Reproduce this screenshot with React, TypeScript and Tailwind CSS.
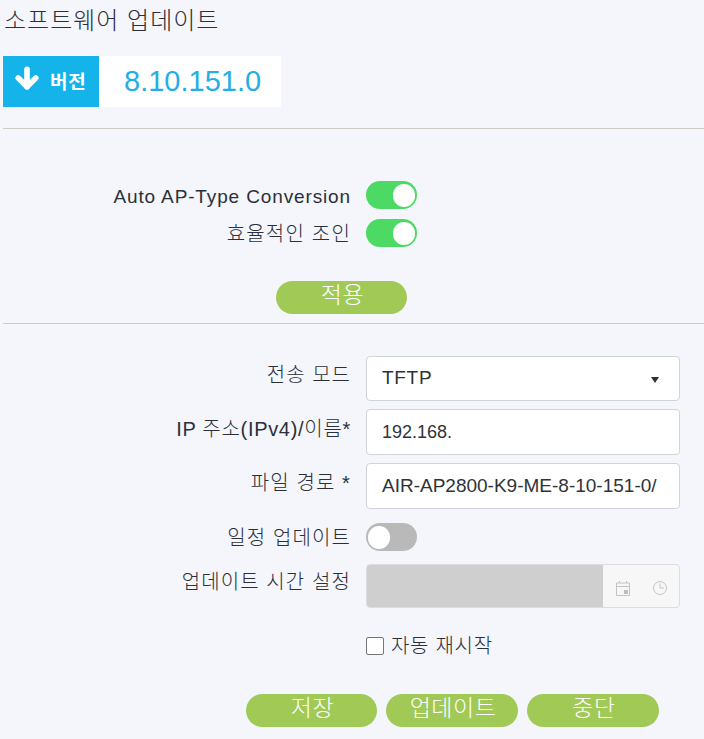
import React from 'react';
import { ArrowDown } from 'lucide-react';

const FONT = 'font-["Liberation_Sans","Noto_Sans_CJK_KR",sans-serif]';

const Toggle = ({ on }: { on: boolean }) => (
  <div className={`flex h-[28px] w-[51px] shrink-0 items-center rounded-full px-[2px] ${on ? 'justify-end bg-[#4cd964]' : 'justify-start bg-[#b9b9b9]'}`}>
    <div className="h-[23px] w-[22px] rounded-full bg-white" />
  </div>
);

const Pill = ({ label, width }: { label: string; width: string }) => (
  <button className={`flex h-[33px] items-start justify-center rounded-full bg-[#a0c955] pl-[2px] pt-[1px] text-[23px] font-light leading-[26px] tracking-[0.5px] text-white ${width}`}>
    {label}
  </button>
);

const Row = ({ label, top, children }: { label: string; top?: string; children: React.ReactNode }) => (
  <div className="flex items-start">
    <div className={`w-[351px] shrink-0 text-right leading-[24px] text-[#2b3038] ${top ?? ''}`}>{label}</div>
    <div className="ml-[15px]">{children}</div>
  </div>
);

const Field = ({ value, height, text, children }: { value: string; height?: string; text?: string; children?: React.ReactNode }) => (
  <div className={`flex w-[314px] items-center justify-between rounded-[4px] border border-[#d0d3d8] bg-white pl-[15px] pr-[20px] text-[#2f3338] ${height ?? 'h-[46px]'} ${text ?? 'text-[19px]'}`}>
    <span>{value}</span>
    {children}
  </div>
);

export default function App() {
  return (
    <div className={`h-[739px] w-[704px] overflow-hidden bg-[#f4f6fb] ${FONT}`}>
      <h1 className="pl-[4px] pt-[7px] text-[24px] font-light leading-[28px] tracking-[1px] text-[#2b3038]">소프트웨어 업데이트</h1>

      <div className="ml-[3px] mt-[21px] flex h-[51px] w-[278px] bg-white">
        <div className="flex w-[96px] items-center bg-[#14b3ea] pl-[9px] text-white">
          <ArrowDown size={30} strokeWidth={4.5} className="-mt-[8px]" />
          <span className="ml-[8px] mt-[3px] text-[19px] font-bold tracking-[0.7px]">버전</span>
        </div>
        <div className="pl-[25px] text-[29px] leading-[50px] text-[#25aee6]">8.10.151.0</div>
      </div>

      <div className="ml-[3px] mt-[21px] h-[1px] bg-[#cdcbc4]" />

      <div className="mt-[52px] flex flex-col gap-[10px]">
        <Row label="Auto AP-Type Conversion" top="pt-[4px] text-[19px] tracking-[0.87px]"><Toggle on /></Row>
        <Row label="효율적인 조인" top="pt-[3px] text-[20px] font-light tracking-[1.2px]"><Toggle on /></Row>
      </div>

      <div className="ml-[276px] mt-[34px]"><Pill label="적용" width="w-[131px]" /></div>

      <div className="ml-[3px] mt-[9px] h-[1px] bg-[#cdcbc4]" />

      <div className="mt-[32px] flex flex-col gap-[8px]">
        <Row label="전송 모드" top="pt-[7px] text-[20px] font-light tracking-[1px]">
          <Field value="TFTP" height="h-[45px]" text="text-[19px] tracking-[0.7px]">
            <span className="mt-[3px] h-0 w-0 border-x-[4px] border-t-[6px] border-x-transparent border-t-[#2f3338]" />
          </Field>
        </Row>
        <Row label="IP 주소(IPv4)/이름*" top="pt-[8px] text-[20px] font-light tracking-[0.7px]">
          <Field value="192.168." text="text-[18px]" />
        </Row>
        <Row label="파일 경로 *" top="pt-[8px] text-[20px] font-light tracking-[1.1px]">
          <Field value="AIR-AP2800-K9-ME-8-10-151-0/" />
        </Row>
      </div>

      <div className="mt-[14px]">
        <Row label="일정 업데이트" top="pt-[3px] text-[20px] font-light tracking-[1.1px]"><Toggle on={false} /></Row>
      </div>

      <div className="mt-[13px]">
        <Row label="업데이트 시간 설정" top="pt-[6px] text-[20px] font-light tracking-[1.1px]">
          <div className="flex h-[44px] w-[314px] overflow-hidden rounded-[4px] border border-[#dcdde0] bg-[#f7f7f8]">
            <div className="w-[236px] bg-[#cfcfcf]" />
            <div className="flex items-center pl-[12px] pt-[4px]">
              <svg width="16" height="17" viewBox="0 0 16 17" fill="none" stroke="#c4c4c4" strokeWidth="1">
                <path d="M1.5 3h13v12.5h-13z" />
                <path d="M1.5 6.5h13M4.5 1v2M11.5 1v2" />
                <rect x="9" y="10" width="4" height="4" fill="#bdbdbd" stroke="none" />
              </svg>
              <svg className="ml-[21px]" width="16" height="16" viewBox="0 0 16 16" fill="none" stroke="#c4c4c4" strokeWidth="1">
                <circle cx="8" cy="8" r="6.5" />
                <path d="M8 3.5V8h4" />
              </svg>
            </div>
          </div>
        </Row>
      </div>

      <label className="ml-[366px] mt-[26px] flex items-center">
        <span className="h-[18px] w-[18px] rounded-[2px] border border-[#767676] bg-white" />
        <span className="ml-[7px] text-[20px] font-light leading-[24px] tracking-[0.7px] text-[#2b3038]">자동 재시작</span>
      </label>

      <div className="ml-[246px] mt-[36px] flex gap-[9px]">
        <Pill label="저장" width="w-[131px]" />
        <Pill label="업데이트" width="w-[132px]" />
        <Pill label="중단" width="w-[132px]" />
      </div>
    </div>
  );
}
